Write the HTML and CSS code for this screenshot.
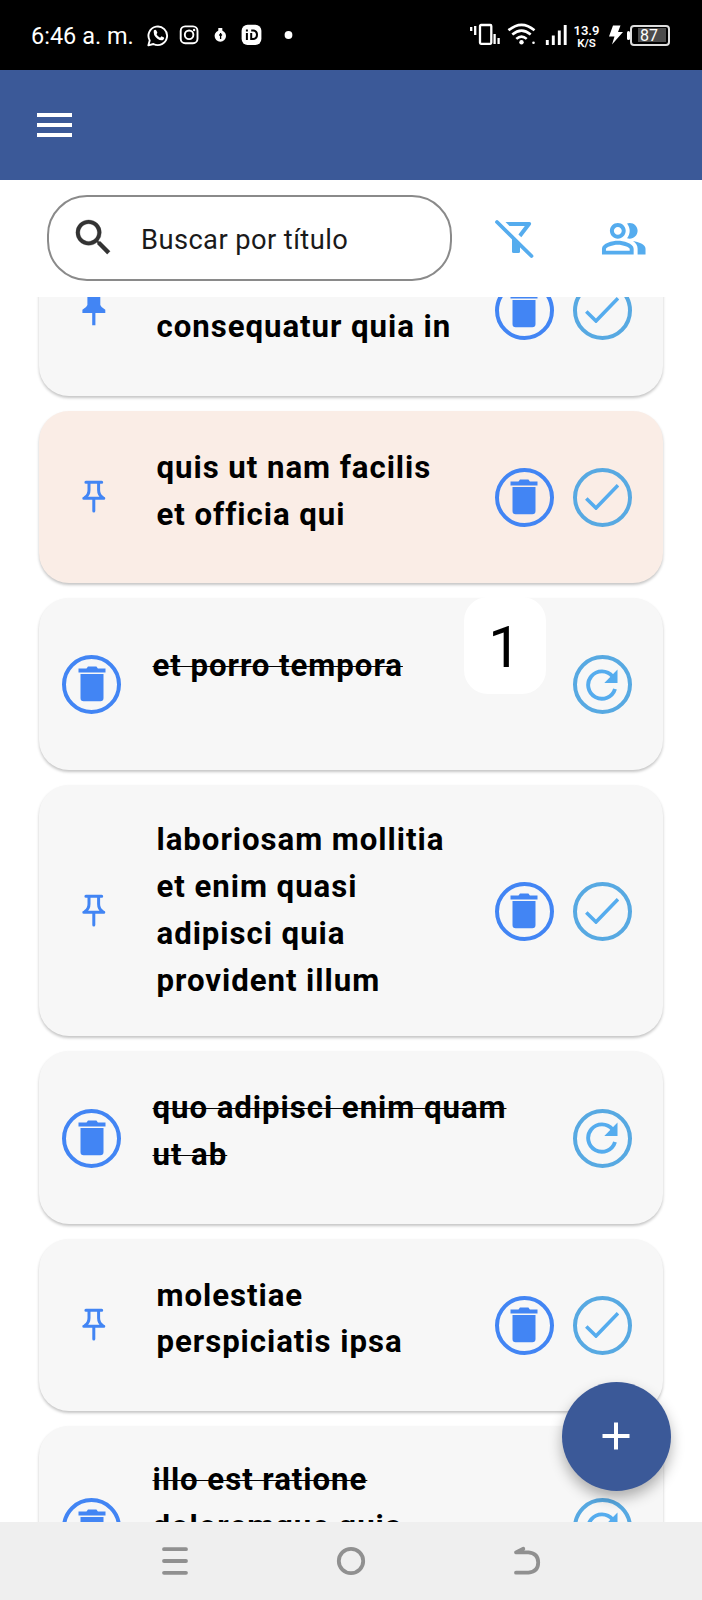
FILE: index.html
```html
<!DOCTYPE html>
<html lang="es">
<head>
<meta charset="utf-8">
<title>Tareas</title>
<link rel="stylesheet" href="styles.css">
</head>
<body>
<svg class="defs" width="0" height="0">
  <symbol id="trash" viewBox="0 0 28 37"><path d="M.5 2.400h8L10 .6h8.400l1.500 1.800h7.600v4H.5zM2.500 8h23v24q0 3.200-3.200 3.200H5.700q-3.200 0-3.200-3.200z"/></symbol>
  <symbol id="check" viewBox="0 0 34 26"><path d="M1.300 14.500 11 24 33 1.300" fill="none" stroke="currentColor" stroke-width="3.600"/></symbol>
  <symbol id="redo" viewBox="0 0 32 32"><path d="M29 20A13.700 13.700 0 1 1 26.600 7.500" fill="none" stroke="currentColor" stroke-width="3.900"/><path d="M31.500.6v13.300H18.300z"/></symbol>
  <symbol id="pin" viewBox="0 0 24 34"><path d="M3.900 2.200h15.800M7 2.200v7.700q0 4.600-3.700 7.400M16.600 2.200v7.700q0 4.600 3.700 7.400M1.800 18.300h20M11.800 18.300v12.800" fill="none" stroke="currentColor" stroke-width="3" stroke-linecap="round"/></symbol>
  <symbol id="pin-full" viewBox="0 0 24 34"><path d="M2.500 1h19v2.600h-3.200v8.400q.7 2.500 5 4.700V20h-9.900v12.200h-3.200V20H.4v-3.300q4.300-2.200 5-4.700V3.600H2.500z"/></symbol>
</svg>
<div class="phone">
  <header class="status">
    <span class="clock">6:46 a. m.</span>
    <svg class="status-left" width="150" height="24" viewBox="0 0 150 24">
      <path d="M2.700 17.400 1.400 22.300l5-1.300A9.300 9.300 0 1 0 2.700 17.400z" fill="none" stroke="#fff" stroke-width="1.900" stroke-linejoin="round"/>
      <path d="M6.900 7.300q1.500-1.500 2.600.4l.9 2-.9 1.500q1 2.400 3.600 3.500l1.400-1.400 2.500 1.300q.8 1-.9 2.300-2.200 1.300-5.700-1.100Q5.600 11.800 6.900 7.300z" fill="#fff"/>
      <rect x="33.700" y="3.400" width="16.800" height="16.800" rx="4.500" fill="none" stroke="#fff" stroke-width="1.900"/>
      <circle cx="42.100" cy="11.800" r="4.300" fill="none" stroke="#fff" stroke-width="1.900"/>
      <circle cx="47.100" cy="7" r="1.200" fill="#fff"/>
      <circle cx="73.300" cy="13" r="5.700" fill="#fff"/><path d="M71.300 5h4v4h-4z" fill="#fff"/><path d="M73.600 10v6M72.100 12h3" stroke="#000" stroke-width="1.300"/>
      <rect x="94.600" y="1.800" width="19.800" height="20.200" rx="6" fill="#fff"/>
      <path d="M99.900 10v7M99.900 6.500v2M104.200 7.500h2q3.800.5 3.800 4.300t-3.800 4.200h-2v-6" fill="none" stroke="#000" stroke-width="2"/>
      <circle cx="141.500" cy="12" r="3.900" fill="#fff"/>
    </svg>
    <svg class="status-radio" width="98" height="26" viewBox="0 0 98 26">
      <g fill="none" stroke="#fff" stroke-width="2.300">
        <path d="M1.200 5v4M5.200 4v9M24.600 12v10M28.600 16v6"/><rect x="10" y="3" width="11.300" height="18.800" rx="1"/>
        <path d="M38.500 8.300q13-11 26 0M42.300 12.600q9.200-7.800 18.400 0M46.300 16.900q5.200-4.700 10.400 0" stroke-width="2.600"/>
      </g>
      <circle cx="51.500" cy="20.300" r="2.200" fill="#fff"/><circle cx="63.500" cy="20.800" r="1.300" fill="#fff"/>
      <path d="M77.300 18v5M83.300 13.500V23M89.300 8.500V23M95.200 3v20" stroke="#fff" stroke-width="2.900"/>
    </svg>
    <span class="speed"><b>13.9</b><b>K/S</b></span>
    <svg class="bolt" width="14" height="20" viewBox="0 0 14 20"><path d="M4 .5h7.500L9 7h5L3 19.500 5.500 11.500H0z" fill="#fff"/></svg>
    <span class="nub"></span>
    <span class="battery"><span class="level">87</span></span>
  </header>
  <div class="appbar"><svg width="35" height="24" viewBox="0 0 35 24"><path d="M0 0h35v4H0zM0 10h35v4H0zM0 20h35v4H0z" fill="#fff"/></svg></div>
  <div class="tools">
    <div class="search">
      <svg width="47" height="47" viewBox="0 0 24 24"><path fill="#333" stroke="#333" stroke-width=".15" d="M15.500 14h-.79l-.28-.27A6.471 6.471 0 0 0 16 9.500 6.500 6.500 0 1 0 9.500 16c1.610 0 3.090-.59 4.230-1.570l.27.28v.79l5 4.990L20.490 19l-4.990-5zm-6 0C7.010 14 5 11.990 5 9.500S7.010 5 9.500 5 14 7.010 14 9.500 11.990 14 9.500 14z"/></svg>
      <span>Buscar por título</span>
    </div>
    <svg class="filter" width="40" height="40" viewBox="0 0 40 40" fill="none" stroke="currentColor"><path d="M11.500 3h24q2.500.6 1.200 2.900L27.300 18.300l-2.900-2.700L30.800 7H15.500z" fill="currentColor" stroke="none"/><path d="M18 17v15.500q0 1.500 1.500 1.500h5q1.500 0 1.500-1.500V25z" fill="currentColor" stroke="none"/><path d="M3 3 37.500 37" stroke-width="3.800" stroke-linecap="round"/></svg>
    <svg class="people" width="47.500" height="47.500" viewBox="0 0 24 24" fill="currentColor"><path d="M16.670 13.130C18.040 14.060 19 15.320 19 17v3h4v-3c0-2.180-3.570-3.470-6.330-3.870zM15 12c2.210 0 4-1.790 4-4s-1.790-4-4-4c-.47 0-.91.1-1.330.24C14.500 5.270 15 6.580 15 8s-.5 2.730-1.330 3.760c.42.14.86.24 1.330.24zM9 12c2.210 0 4-1.790 4-4s-1.790-4-4-4-4 1.790-4 4 1.790 4 4 4zm0-6c1.100 0 2 .9 2 2s-.9 2-2 2-2-.9-2-2 .9-2 2-2zm0 7c-2.670 0-8 1.340-8 4v3h16v-3c0-2.660-5.330-4-8-4zm6 5H3v-.99C3.200 16.290 6.300 15 9 15s5.800 1.290 6 2v1z"/></svg>
  </div>
  <main class="list">
    <article class="card first"><svg class="pin"><use href="#pin-full"/></svg><p>et magni<br>consequatur quia in</p><span class="round del"><svg><use href="#trash"/></svg></span><span class="round ok"><svg><use href="#check"/></svg></span></article>
    <article class="card warm"><svg class="pin"><use href="#pin"/></svg><p>quis ut nam facilis<br>et officia qui</p><span class="round del"><svg><use href="#trash"/></svg></span><span class="round ok"><svg><use href="#check"/></svg></span></article>
    <article class="card done single"><span class="round del"><svg><use href="#trash"/></svg></span><p>et porro tempora</p><span class="round again"><svg><use href="#redo"/></svg></span><span class="count">1</span></article>
    <article class="card tall"><svg class="pin"><use href="#pin"/></svg><p>laboriosam mollitia<br>et enim quasi<br>adipisci quia<br>provident illum</p><span class="round del"><svg><use href="#trash"/></svg></span><span class="round ok"><svg><use href="#check"/></svg></span></article>
    <article class="card done"><span class="round del"><svg><use href="#trash"/></svg></span><p>quo adipisci enim quam<br>ut ab</p><span class="round again"><svg><use href="#redo"/></svg></span></article>
    <article class="card"><svg class="pin"><use href="#pin"/></svg><p>molestiae<br>perspiciatis ipsa</p><span class="round del"><svg><use href="#trash"/></svg></span><span class="round ok"><svg><use href="#check"/></svg></span></article>
    <article class="card done three"><span class="round del"><svg><use href="#trash"/></svg></span><p>illo est ratione<br>doloremque quia</p><span class="round again"><svg><use href="#redo"/></svg></span></article>
  </main>
  <button class="fab" aria-label="Agregar"><svg width="28" height="28" viewBox="0 0 28 28"><path d="M14 .5v27M.5 14h27" stroke="#fff" stroke-width="4"/></svg></button>
  <nav class="nav">
    <svg width="30" height="32" viewBox="0 0 30 32"><path d="M4 4.200h22M4 16h22M4 27.800h22"/></svg>
    <svg width="30" height="32" viewBox="0 0 30 32"><circle cx="15" cy="16" r="12.200"/></svg>
    <svg width="30" height="32" viewBox="0 0 30 32"><path d="M11.300 3.800 4 7.400h12.500q9.700 1 9.700 10.200T16.500 27.700H4"/></svg>
  </nav>
</div>
</body>
</html>
```
FILE: styles.css
```css
* { box-sizing: border-box; }
body { margin: 0; background: #fff; font-family: Roboto, "Liberation Sans", sans-serif; }
svg { display: block; flex: none; }
.defs { position: absolute; }
.phone { position: relative; width: 702px; height: 1600px; display: flex; flex-direction: column; overflow: hidden; }

.status { height: 70px; flex: none; background: #000; color: #fff; display: flex; align-items: center; padding-left: 31px; }
.clock { width: 116px; flex: none; font-size: 23.500px; letter-spacing: 0; white-space: nowrap; padding-top: 2px; }
.status-radio { margin-left: 173px; }
.speed { width: 27px; margin-left: 5px; display: flex; flex-direction: column; align-items: center; font-size: 13px; line-height: 12px; padding-top: 3px; }
.speed b { font-weight: 600; }
.speed b:last-child { font-size: 11.500px; }
.bolt { margin-left: 9px; }
.nub { width: 3px; height: 9px; background: #fff; border-radius: 2px; margin-left: 4px; }
.battery { width: 40px; height: 21px; border: 2px solid #ddd; border-radius: 4px; padding: 1.500px 2px 1.500px 6px; display: flex; }
.level { width: 28px; background: #4c4c4c; font-size: 16px; line-height: 15.500px; padding-left: 2px; }

.appbar { height: 110px; flex: none; background: #3b5998; display: flex; align-items: center; padding: 0 0 0 37px; }
.tools { height: 117px; flex: none; display: flex; align-items: flex-start; padding: 15px 0 0 47px; color: #55acee; }
.search { width: 405px; height: 86px; border: 2px solid #8a8a8a; border-radius: 40px; display: flex; align-items: center; padding-left: 21px; color: #1a1a1a; font-size: 27.300px; letter-spacing: .42px; }
.search svg { margin-top: -1px; }
.search span { margin-left: 24px; padding-top: 4px; }
.filter { margin: 24px 0 0 42px; }
.people { margin: 20px 0 0 66px; }

.list { flex: 1; min-height: 0; overflow: hidden; padding: 0 39px 0 38.500px; display: flex; flex-direction: column; gap: 15px; }
.card { position: relative; flex: none; height: 172.300px; border-radius: 30px; background: #f7f7f7; display: flex; align-items: center; padding: 1px 31.500px 0 0; box-shadow: 0 2px 3px rgba(0,0,0,.23); }
.card.first { margin-top: -73.500px; }
.card.warm { background: #faede6; }
.card.tall { height: 251px; }
.card.three { height: 203px; }
.card p { flex: 1; align-self: flex-start; margin: 33px 0 0 50.500px; font-size: 31.200px; line-height: 46.800px; font-weight: 700; letter-spacing: .95px; color: #000; white-space: nowrap; }
.card.tall p { margin-top: 31px; }
.pin { width: 24px; height: 34px; margin-left: 43.500px; color: #4285f4; fill: #4285f4; }
.round { width: 59px; height: 59px; flex: none; border: 4px solid #4285f4; border-radius: 50%; display: flex; align-items: center; justify-content: center; margin-left: 19px; color: #4285f4; fill: currentColor; }
.ok, .again { color: #55acee; border-color: #57a9e2; }
.del svg { width: 28px; height: 37px; }
.ok svg { width: 34px; height: 26px; }
.again svg { width: 32px; height: 32px; }
.done .del { margin-left: 23.500px; }
.done p { margin-left: 31.500px; text-decoration: line-through; text-decoration-thickness: 1px; }
.done.single p { margin-top: 43.500px; }
.done.three p { margin-top: 30.500px; }
.count { position: absolute; left: 425px; top: -1px; width: 82px; height: 97px; border-radius: 24px; background: #fff; font-size: 58px; line-height: 101px; text-align: center; color: #000; }

.fab { position: absolute; left: 561.500px; top: 1381.500px; width: 109px; height: 109px; border: 0; border-radius: 50%; background: #3b5998; display: flex; align-items: center; justify-content: center; padding: 0; box-shadow: 0 7px 14px rgba(0,0,0,.3); }
.nav { height: 78px; flex: none; background: #efefef; display: flex; justify-content: space-between; align-items: center; padding: 0 160px; z-index: 1; }
.nav svg { fill: none; stroke: #909090; stroke-width: 3.800; stroke-linecap: round; stroke-linejoin: round; }
```
